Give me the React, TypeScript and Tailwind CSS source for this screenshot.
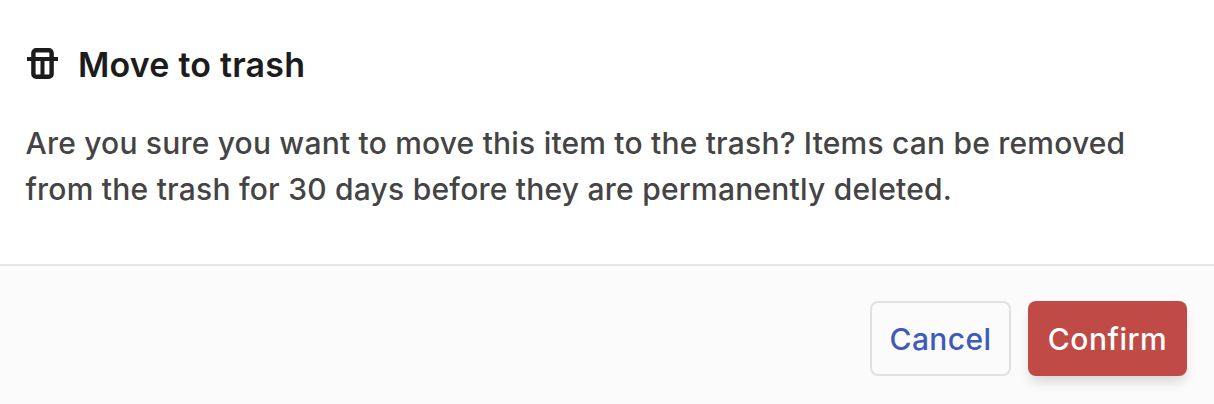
export default function App() {
  return (
    <div className="flex h-[404px] w-[1214px] flex-col bg-white font-['Inter',sans-serif]">
      <main className="h-[264px] px-[25px] pt-[44px]">
        <h1 className="flex h-[42px] items-center text-[#1c1c1c]">
          <svg className="ml-[1px] h-[34px] w-[34px] shrink-0" viewBox="0 0 34 34" fill="none" stroke="currentColor" strokeWidth="4">
            <rect x="7.4" y="2.2" width="18.2" height="26.6" rx="2.8" strokeWidth="4.4" />
            <path d="M1 11H32M16.5 11V29" />
          </svg>
          <span className="ml-[18px] whitespace-nowrap text-[34px] font-semibold leading-[42px] tracking-[0.2px]">Move to trash</span>
        </h1>
        <p className="mt-[34px] whitespace-nowrap pl-[0.5px] text-[30px] leading-[46px] font-medium tracking-[0.2px] text-[#444444]">
          Are you sure you want to move this item to the trash? Items can be removed<br />
          <span className="tracking-[0.23px]">from the trash for 30 days before they are permanently deleted.</span>
        </p>
      </main>
      <footer className="flex h-[140px] justify-end gap-[17px] border-t-2 border-[#e5e5e5] bg-[#fbfbfb] pr-[27px] pt-[35px]">
        <button className="h-[75px] w-[141px] rounded-lg border-2 border-[#e1e1e1] pt-[2px] text-[30px] font-medium tracking-[0.4px] text-[#3e5abd]">Cancel</button>
        <button className="h-[75px] w-[159px] rounded-lg bg-[#c04b46] pt-[2px] text-[30px] font-medium tracking-[0.5px] text-white shadow-[0_8px_12px_-2px_rgba(0,0,0,0.14)]">Confirm</button>
      </footer>
    </div>
  );
}
